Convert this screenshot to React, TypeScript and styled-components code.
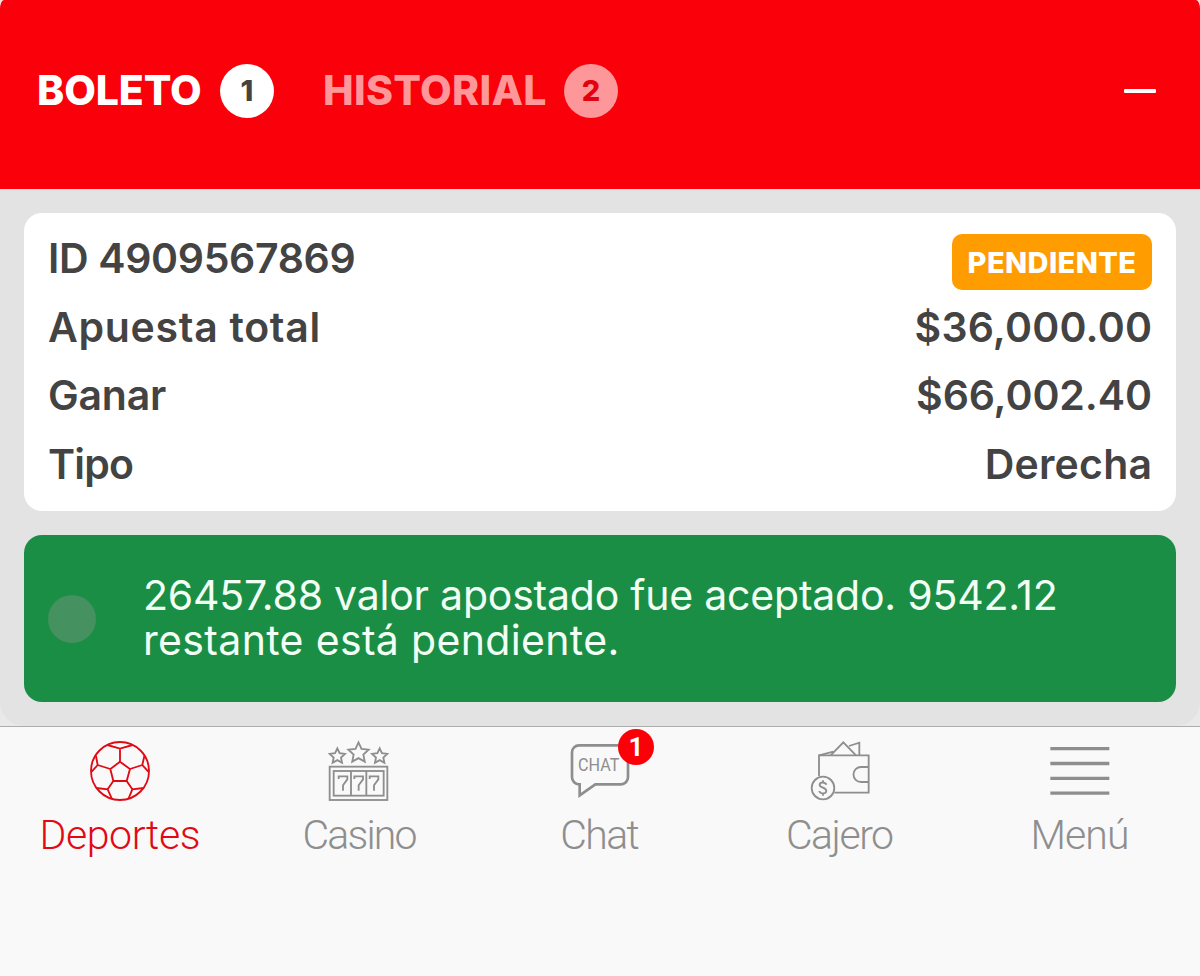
import React from 'react';
import styled, { createGlobalStyle } from 'styled-components';

const GlobalStyle = createGlobalStyle`
  * { box-sizing: border-box; }
  body { margin: 0; background: #f9f9f9; font-family: Inter, "Liberation Sans", sans-serif; color: #444343; }
`;

const Screen = styled.div`
  width: 1200px;
  height: 976px;
  overflow: hidden;
  display: flex;
  flex-direction: column;
  background: #f9f9f9;
`;

const Slip = styled.main`
  background: #e3e3e3;
  height: 726px;
  border-radius: 4px 4px 24px 24px / 9px 9px 24px 24px;
  overflow: hidden;
`;

const SlipBackdrop = styled.div`
  background: linear-gradient(#f9dcdc 0 40px, #e9e9e9 40px);
`;

const Header = styled.header`
  height: 189px;
  padding: 0 44px 8px 37px;
  display: flex;
  align-items: center;
  background: #f9000b;
`;

const Tab = styled.div<{ $active?: boolean }>`
  display: flex;
  align-items: center;
  margin-right: 49px;
  color: ${(p) => (p.$active ? '#fff' : '#fd9799')};
`;

const TabLabel = styled.span<{ $width: number; $track: number }>`
  width: ${(p) => p.$width}px;
  padding-bottom: 2px;
  font-size: 41px;
  line-height: 50px;
  font-weight: 800;
  white-space: nowrap;
  letter-spacing: ${(p) => p.$track}px;
`;

const Count = styled.span<{ $active?: boolean }>`
  width: 54px;
  height: 54px;
  border-radius: 50%;
  display: flex;
  align-items: center;
  justify-content: center;
  font-size: 29px;
  font-weight: 800;
  background: ${(p) => (p.$active ? '#fff' : '#fd9799')};
  color: ${(p) => (p.$active ? '#444343' : '#e3000f')};
`;

const Collapse = styled.span`
  width: 32px;
  height: 4px;
  margin-left: auto;
  border-radius: 1px;
  background: #fff;
`;

const Body = styled.div`
  padding: 24px;
  display: flex;
  flex-direction: column;
  gap: 24px;
`;

const Card = styled.section`
  height: 298px;
  padding: 11px 24px 0 24px;
  border-radius: 18px;
  background: #fff;
`;

const Row = styled.div`
  height: 68.6px;
  display: flex;
  justify-content: space-between;
  align-items: center;
`;

const RowText = styled.span<{ $track: number }>`
  font-size: 41px;
  font-weight: 600;
  white-space: nowrap;
  letter-spacing: ${(p) => p.$track}px;
  margin-right: ${(p) => -p.$track}px;
`;

const Status = styled.span`
  width: 200px;
  height: 56px;
  margin-top: 8px;
  display: flex;
  align-items: center;
  justify-content: center;
  border-radius: 10px;
  background: #ff9c00;
  color: #fff;
  font-size: 29px;
  font-weight: 800;
  letter-spacing: 0.4px;
`;

const Notice = styled.section`
  height: 167px;
  padding: 0 24px;
  display: flex;
  align-items: center;
  gap: 47px;
  border-radius: 18px;
  background: #1b8e46;
  color: #f2fff4;
`;

const Dot = styled.span`
  width: 48px;
  height: 48px;
  border-radius: 50%;
  background: #45915f;
`;

const NoticeText = styled.p`
  margin: 0;
  padding-bottom: 2px;
  font-size: 41px;
  line-height: 44.6px;
  white-space: nowrap;
`;

const NoticeLine = styled.span<{ $track: number }>`
  display: block;
  letter-spacing: ${(p) => p.$track}px;
`;

const Nav = styled.nav`
  flex: 1;
  display: grid;
  grid-template-columns: repeat(5, 1fr);
  border-top: 1px solid #adadad;
  font-family: Roboto, "Liberation Sans", sans-serif;
`;

const NavItem = styled.div<{ $active?: boolean }>`
  position: relative;
  padding-top: 13px;
  display: flex;
  flex-direction: column;
  align-items: center;
  color: ${(p) => (p.$active ? '#e10914' : '#8e8e8e')};
`;

const Icon = styled.svg`
  width: 60px;
  height: 62px;
  overflow: visible;
  fill: none;
  stroke: currentColor;
  stroke-width: 5.5;
`;

const NavLabel = styled.span<{ $track: number }>`
  margin-top: 8px;
  font-size: 41px;
  line-height: 50px;
  font-weight: 300;
  letter-spacing: ${(p) => p.$track}px;
  margin-right: ${(p) => -p.$track}px;
`;

const Unread = styled.span`
  position: absolute;
  top: 2px;
  left: 138px;
  width: 36px;
  height: 36px;
  border-radius: 50%;
  display: flex;
  align-items: center;
  justify-content: center;
  background: #fb0007;
  color: #fff;
  font-size: 26px;
  font-weight: 700;
`;

const star = (cx: number, cy: number, r: number) =>
  Array.from({ length: 10 }, (_, i) => {
    const a = (i * Math.PI) / 5 - Math.PI / 2;
    const k = i % 2 ? r * 0.48 : r;
    return `${(cx + k * Math.cos(a)).toFixed(1)},${(cy + k * Math.sin(a)).toFixed(1)}`;
  }).join(' ');

const BallIcon = () => (
  <Icon viewBox="210 60 180 186">
    <circle cx="300" cy="153" r="87" />
    <path d="M300 125L330 147L320 183H280L271 147ZM300 125V86M262 75L300 86L338 75M330 147L367 135M373 108L367 135L385 155M320 183L337 208M372 204L337 208L325 237M280 183L263 208M228 204L263 208L276 237M271 147L233 135M228 108L233 135L215 155" />
  </Icon>
);

const SlotsIcon = () => (
  <Icon viewBox="120 30 180 186">
    <rect x="119" y="110" width="173" height="100" />
    <rect x="131" y="123" width="150" height="74" />
    <path d="M183 123V197M229 123V197" />
    <path d="M146 147V139H172V148L159 166V182M193 147V139H219V148L206 166V182M239 147V139H265V148L252 166V182" />
    <polygon points={star(142, 79, 24)} />
    <polygon points={star(205.5, 69, 32)} />
    <polygon points={star(269, 79, 24)} />
  </Icon>
);

const ChatIcon = () => (
  <Icon viewBox="90 60 180 186">
    <path
      strokeWidth="8"
      d="M117 76H243A21 21 0 0 1 264 97V172A21 21 0 0 1 243 193H166L119 226V193H117A21 21 0 0 1 96 172V97A21 21 0 0 1 117 76Z"
    />
    <text x="114" y="152" fontSize="53" fontWeight="400" fill="currentColor" stroke="none" textLength="124" lengthAdjust="spacingAndGlyphs">
      CHAT
    </text>
  </Icon>
);

const WalletIcon = () => (
  <Icon viewBox="90 30 180 186">
    <path d="M117 139V76H266V188H163M266 111H243A22 22 0 0 0 243 156H266" />
    <path d="M152 76L190 37L228 76M207 48L238 38V76M117 76L160 65" />
    <circle cx="129" cy="174" r="34" />
    <path d="M139 164C137 156 120 155 119 164C119 175 139 171 139 183C138 193 119 192 118 183M129 151V158M129 190V197" />
  </Icon>
);

const MenuIcon = () => (
  <Icon viewBox="90 30 180 186">
    <path strokeWidth="10" d="M91 56H268M91 100.500H268M91 145H268M91 189.500H268" />
  </Icon>
);

const details = [
  { label: 'Apuesta total', lt: 0.7, value: '$36,000.00', vt: 0.2 },
  { label: 'Ganar', lt: -0.2, value: '$66,002.40', vt: -0.1 },
  { label: 'Tipo', lt: -0.8, value: 'Derecha', vt: 0.2 },
];

const navItems = [
  { label: 'Deportes', track: -0.4, icon: <BallIcon />, active: true },
  { label: 'Casino', track: -1.8, icon: <SlotsIcon /> },
  { label: 'Chat', track: -1.6, icon: <ChatIcon />, unread: 1 },
  { label: 'Cajero', track: -1.5, icon: <WalletIcon /> },
  { label: 'Menú', track: -0.9, icon: <MenuIcon /> },
];

export default function App() {
  return (
    <>
      <GlobalStyle />
      <Screen>
        <SlipBackdrop>
          <Slip>
            <Header>
              <Tab $active>
                <TabLabel $width={183} $track={-0.1}>BOLETO</TabLabel>
                <Count $active>1</Count>
              </Tab>
              <Tab>
                <TabLabel $width={241} $track={0.3}>HISTORIAL</TabLabel>
                <Count>2</Count>
              </Tab>
              <Collapse />
            </Header>
            <Body>
              <Card>
                <Row>
                  <RowText $track={-0.35}>ID 4909567869</RowText>
                  <Status>PENDIENTE</Status>
                </Row>
                {details.map((d) => (
                  <Row key={d.label}>
                    <RowText $track={d.lt}>{d.label}</RowText>
                    <RowText $track={d.vt}>{d.value}</RowText>
                  </Row>
                ))}
              </Card>
              <Notice>
                <Dot />
                <NoticeText>
                  <NoticeLine $track={-0.22}>26457.88 valor apostado fue aceptado. 9542.12</NoticeLine>
                  <NoticeLine $track={0.34}>restante está pendiente.</NoticeLine>
                </NoticeText>
              </Notice>
            </Body>
          </Slip>
        </SlipBackdrop>
        <Nav>
          {navItems.map((n) => (
            <NavItem key={n.label} $active={n.active}>
              {n.icon}
              <NavLabel $track={n.track}>{n.label}</NavLabel>
              {n.unread && <Unread>{n.unread}</Unread>}
            </NavItem>
          ))}
        </Nav>
      </Screen>
    </>
  );
}
